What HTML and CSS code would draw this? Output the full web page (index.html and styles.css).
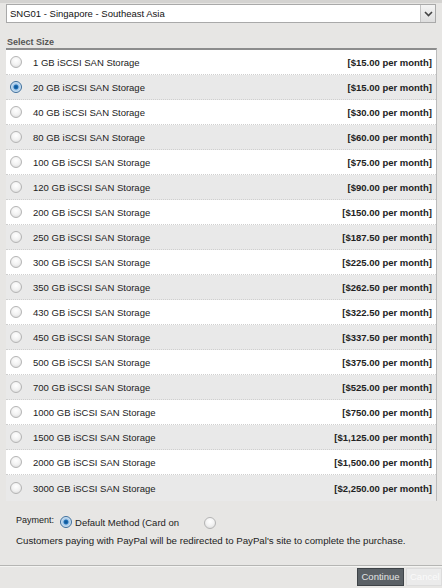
FILE: index.html
```html
<!DOCTYPE html>
<html>
<head>
<meta charset="utf-8">
<link rel="stylesheet" href="styles.css">
</head>
<body>
<div class="topstrip"></div>
<div class="content">
  <div class="select">
    <span class="select-text">SNG01 - Singapore - Southeast Asia</span>
    <span class="select-btn"><svg width="9" height="6" viewBox="0 0 9 6"><path d="M1 1 L4.5 4.5 L8 1" fill="none" stroke="#444" stroke-width="1.6"/></svg></span>
  </div>
  <div class="label">Select Size</div>
  <div class="table">
    <div class="row"><span class="radio"></span><span class="name">1 GB iSCSI SAN Storage</span><span class="price">[$15.00 per month]</span></div>
    <div class="row alt"><span class="radio on"></span><span class="name">20 GB iSCSI SAN Storage</span><span class="price">[$15.00 per month]</span></div>
    <div class="row"><span class="radio"></span><span class="name">40 GB iSCSI SAN Storage</span><span class="price">[$30.00 per month]</span></div>
    <div class="row alt"><span class="radio"></span><span class="name">80 GB iSCSI SAN Storage</span><span class="price">[$60.00 per month]</span></div>
    <div class="row"><span class="radio"></span><span class="name">100 GB iSCSI SAN Storage</span><span class="price">[$75.00 per month]</span></div>
    <div class="row alt"><span class="radio"></span><span class="name">120 GB iSCSI SAN Storage</span><span class="price">[$90.00 per month]</span></div>
    <div class="row"><span class="radio"></span><span class="name">200 GB iSCSI SAN Storage</span><span class="price">[$150.00 per month]</span></div>
    <div class="row alt"><span class="radio"></span><span class="name">250 GB iSCSI SAN Storage</span><span class="price">[$187.50 per month]</span></div>
    <div class="row"><span class="radio"></span><span class="name">300 GB iSCSI SAN Storage</span><span class="price">[$225.00 per month]</span></div>
    <div class="row alt"><span class="radio"></span><span class="name">350 GB iSCSI SAN Storage</span><span class="price">[$262.50 per month]</span></div>
    <div class="row"><span class="radio"></span><span class="name">430 GB iSCSI SAN Storage</span><span class="price">[$322.50 per month]</span></div>
    <div class="row alt"><span class="radio"></span><span class="name">450 GB iSCSI SAN Storage</span><span class="price">[$337.50 per month]</span></div>
    <div class="row"><span class="radio"></span><span class="name">500 GB iSCSI SAN Storage</span><span class="price">[$375.00 per month]</span></div>
    <div class="row alt"><span class="radio"></span><span class="name">700 GB iSCSI SAN Storage</span><span class="price">[$525.00 per month]</span></div>
    <div class="row"><span class="radio"></span><span class="name">1000 GB iSCSI SAN Storage</span><span class="price">[$750.00 per month]</span></div>
    <div class="row alt"><span class="radio"></span><span class="name">1500 GB iSCSI SAN Storage</span><span class="price">[$1,125.00 per month]</span></div>
    <div class="row"><span class="radio"></span><span class="name">2000 GB iSCSI SAN Storage</span><span class="price">[$1,500.00 per month]</span></div>
    <div class="row alt last"><span class="radio"></span><span class="name">3000 GB iSCSI SAN Storage</span><span class="price">[$2,250.00 per month]</span></div>
  </div>
  <div class="payment">
    <span class="pay-label">Payment:</span>
    <span class="radio on small"></span>
    <span class="pay-opt">Default Method (Card on</span>
    <span class="radio small second"></span>
  </div>
  <div class="note">Customers paying with PayPal will be redirected to PayPal's site to complete the purchase.</div>
</div>
<div class="footer">
  <span class="btn continue">Continue</span>
  <span class="btn cancel">Cancel</span>
</div>
</body>
</html>
```
FILE: styles.css
```css
html, body {
  margin: 0;
  padding: 0;
}
body {
  background: #e7e6e4;
  font-family: "Liberation Sans", Arial, sans-serif;
  font-size: 9.5px;
  color: #222;
  width: 442px;
  height: 588px;
  overflow: hidden;
}
.topstrip {
  height: 3px;
  background: #d4d3d1;
}
.content {
  padding: 1px 6px 0 6px;
}
.select {
  display: flex;
  align-items: stretch;
  height: 17px;
  background: #fff;
  border: 1px solid #a9a9a9;
  width: 428px;
}
.select-text {
  flex: 1;
  padding-left: 3px;
  line-height: 17px;
  color: #111;
}
.select-btn {
  width: 14px;
  border-left: 1px solid #c4c4c4;
  background: linear-gradient(#f4f4f4, #dedede);
  display: flex;
  align-items: center;
  justify-content: center;
}
.label {
  margin-top: 14px;
  padding-left: 1px;
  font-size: 9px;
  font-weight: bold;
  color: #555;
  height: 11px;
  line-height: 11px;
}
.table {
  margin-top: 0;
  width: 430px;
  border-top: 2px solid #8c8c8c;
  border-right: 1px solid #bdbdbd;
  background: #fff;
}
.row {
  display: flex;
  align-items: center;
  height: 24px;
  border-bottom: 1px dotted #cfcfcf;
  background: #fff;
}
.row.alt {
  background: #e9e9e9;
}
.row.last {
  border-bottom: none;
  height: 26px;
}
.radio {
  width: 10px;
  height: 10px;
  border-radius: 50%;
  border: 1px solid #b4b4b4;
  background: radial-gradient(circle at 50% 35%, #ffffff 0%, #f2f2f2 50%, #d6d6d6 100%);
  flex: none;
  margin-left: 4px;
  margin-right: 11px;
  box-sizing: content-box;
}
.radio.on {
  border-color: #3c6e9c;
  background: radial-gradient(circle, #0b4f8c 0%, #1b6db5 28%, #9cc3e6 40%, #d5e6f4 70%, #a9c6e0 100%);
}
.name {
  flex: 1;
  color: #222;
}
.price {
  font-weight: bold;
  color: #222;
  padding-right: 4px;
}
.payment {
  display: flex;
  align-items: center;
  margin-top: 14px;
  padding-left: 10px;
  height: 14px;
}
.pay-label {
  font-size: 9px;
  color: #222;
  margin-top: -4px;
  margin-right: 6px;
}
.radio.small {
  margin-left: 0;
  margin-right: 3px;
}
.pay-opt {
  color: #222;
  width: 129px;
}
.radio.second {
  margin-top: 1px;
}
.note {
  margin-top: 5px;
  padding-left: 10px;
  color: #222;
  font-size: 9.7px;
  line-height: 13px;
}
.footer {
  margin-top: 18px;
  border-top: 1px solid #b5b5b3;
  box-shadow: inset 0 1px 0 #f4f4f2;
  height: 22px;
  display: flex;
  justify-content: flex-end;
  align-items: center;
  gap: 2px;
  background: #e7e6e4;
}
.btn {
  height: 18px;
  font-size: 9.5px;
  box-sizing: border-box;
}
.continue {
  background: #5b6166;
  color: #e4e4e4;
  border: 1px solid #3e4347;
  width: 47px;
  text-align: center;
  line-height: 16px;
}
.cancel {
  background: #ebebeb;
  color: #fafafa;
  border: 1px solid #dcdcdc;
  width: 36px;
  padding: 0 0 0 3px;
  overflow: hidden;
  white-space: nowrap;
  line-height: 16px;
}
```
